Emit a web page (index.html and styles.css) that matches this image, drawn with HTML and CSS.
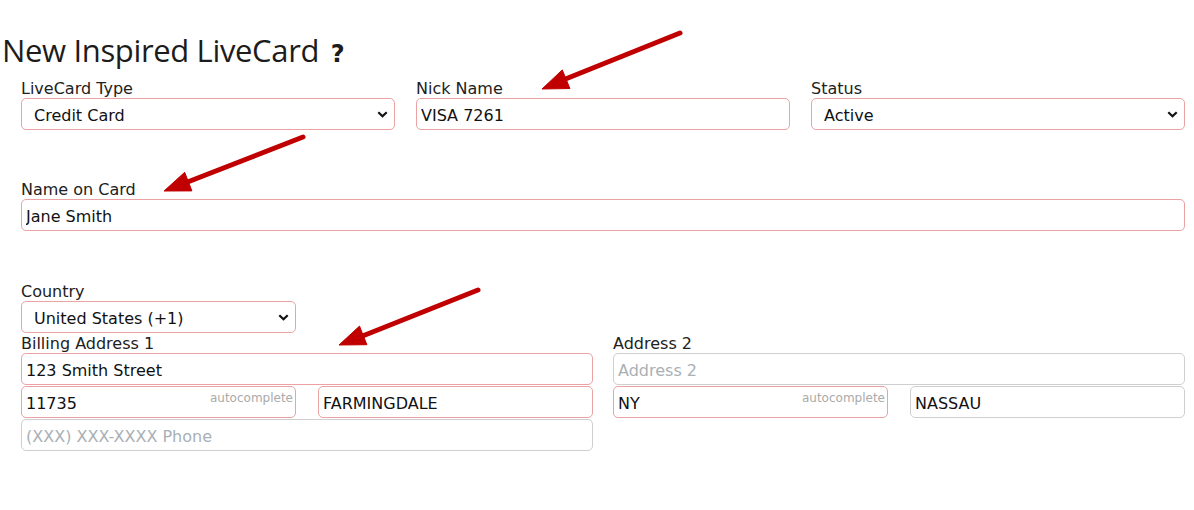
FILE: index.html
```html
<!DOCTYPE html>
<html>
<head>
<meta charset="utf-8">
<link rel="stylesheet" href="styles.css">
</head>
<body>
<div class="page">
  <h1 class="title">New Inspired LiveCard <span class="help">?</span></h1>
  <div class="form">
    <div class="row-three">
      <div class="field">
        <label class="lbl">LiveCard Type</label>
        <div class="sel-wrap">
          <select class="ctl sel req"><option>Credit Card</option></select>
          <svg class="chev" width="11" height="7" viewBox="0 0 11 7"><path d="M1.3 1.3 L5.5 5.3 L9.7 1.3" fill="none" stroke="#111" stroke-width="2.2"/></svg>
        </div>
      </div>
      <div class="field">
        <label class="lbl">Nick Name</label>
        <input class="ctl req" value="VISA 7261">
      </div>
      <div class="field">
        <label class="lbl">Status</label>
        <div class="sel-wrap">
          <select class="ctl sel req"><option>Active</option></select>
          <svg class="chev" width="11" height="7" viewBox="0 0 11 7"><path d="M1.3 1.3 L5.5 5.3 L9.7 1.3" fill="none" stroke="#111" stroke-width="2.2"/></svg>
        </div>
      </div>
    </div>

    <div class="field name-field">
      <label class="lbl">Name on Card</label>
      <input class="ctl req" value="Jane Smith">
    </div>

    <div class="field country-field">
      <label class="lbl">Country</label>
      <div class="sel-wrap country">
        <select class="ctl sel req"><option>United States (+1)</option></select>
        <svg class="chev" width="11" height="7" viewBox="0 0 11 7"><path d="M1.3 1.3 L5.5 5.3 L9.7 1.3" fill="none" stroke="#111" stroke-width="2.2"/></svg>
      </div>
    </div>

    <div class="address">
      <div class="col">
        <label class="lbl">Billing Address 1</label>
        <input class="ctl req" value="123 Smith Street">
        <div class="pair">
          <div class="ac-wrap">
            <input class="ctl req" value="11735">
            <span class="ac">autocomplete</span>
          </div>
          <input class="ctl req" value="FARMINGDALE">
        </div>
        <input class="ctl" placeholder="(XXX) XXX-XXXX Phone">
      </div>
      <div class="col">
        <label class="lbl">Address 2</label>
        <input class="ctl" placeholder="Address 2">
        <div class="pair">
          <div class="ac-wrap">
            <input class="ctl req" value="NY">
            <span class="ac">autocomplete</span>
          </div>
          <input class="ctl" value="NASSAU">
        </div>
      </div>
    </div>
  </div>

  <svg class="arrows" width="1194" height="510" viewBox="0 0 1194 510">
    <g fill="#c00000" stroke="#c00000">
      <line x1="680" y1="33" x2="563" y2="80" stroke-width="5" stroke-linecap="round"/>
      <polygon points="542,89 569.9,88.5 562.3,69.9" stroke-width="1" stroke-linejoin="round"/>
      <line x1="303" y1="137" x2="185" y2="183" stroke-width="5" stroke-linecap="round"/>
      <polygon points="164,191 191.9,190.9 184.7,172.3" stroke-width="1" stroke-linejoin="round"/>
      <line x1="478" y1="290" x2="360" y2="337" stroke-width="5" stroke-linecap="round"/>
      <polygon points="339,345 366.9,344.7 359.5,326.1" stroke-width="1" stroke-linejoin="round"/>
    </g>
  </svg>
</div>
</body>
</html>
```

FILE: styles.css
```css
* { box-sizing: border-box; }
html, body { margin: 0; padding: 0; background: #fff; }
body {
  font-family: "DejaVu Sans", Verdana, sans-serif;
  font-size: 16px;
  color: #212121;
}
.page {
  position: relative;
  width: 1194px;
  height: 510px;
  overflow: hidden;
}
.title {
  margin: 28px 0 0 2px;
  height: 44px;
  line-height: 44px;
  font-family: "Open Sans", sans-serif;
  font-weight: 400;
  font-size: 31px;
  color: #1c1c1c;
  letter-spacing: -0.35px;
}
.help {
  font-family: "DejaVu Sans", sans-serif;
  font-weight: 700;
  font-size: 24px;
  color: #1c1c1c;
  margin-left: 4px;
  letter-spacing: 0;
}
.form {
  margin: 8px 0 0 21px;
  width: 1164px;
  display: flex;
  flex-direction: column;
}
.row-three {
  display: grid;
  grid-template-columns: repeat(3, 1fr);
  column-gap: 21px;
}
.field { display: flex; flex-direction: column; }
.lbl {
  display: block;
  height: 18px;
  line-height: 18px;
  font-size: 16px;
  color: #212121;
}
.ctl {
  display: block;
  width: 100%;
  height: 32px;
  margin: 0;
  padding: 2px 4px 0;
  border: 1px solid #cfcfcf;
  border-radius: 5px;
  background: #fff;
  font-family: "DejaVu Sans", Verdana, sans-serif;
  font-size: 16px;
  color: #111;
  outline: none;
}
.ctl::placeholder { color: #a9b0b6; }
.req { border-color: #eaa2a2; }
.sel-wrap { position: relative; }
.sel {
  -webkit-appearance: none;
  appearance: none;
  padding-left: 12px;
  padding-right: 24px;
}
.chev {
  position: absolute;
  right: 7px;
  top: 13px;
  pointer-events: none;
}
.name-field { margin-top: 51px; }
.country-field { margin-top: 52px; }
.country { width: 275px; }
.address {
  margin-top: 2px;
  display: grid;
  grid-template-columns: 1fr 1fr;
  column-gap: 20px;
}
.col { display: flex; flex-direction: column; row-gap: 1px; }
.col .lbl { margin-bottom: -1px; }
.pair {
  display: grid;
  grid-template-columns: 1fr 1fr;
  column-gap: 22px;
}
.ac-wrap { position: relative; }
.ac {
  position: absolute;
  top: 5px;
  right: 3px;
  font-size: 12px;
  line-height: 14px;
  color: #aaa;
}
.arrows {
  position: absolute;
  left: 0;
  top: 0;
  pointer-events: none;
}
```
